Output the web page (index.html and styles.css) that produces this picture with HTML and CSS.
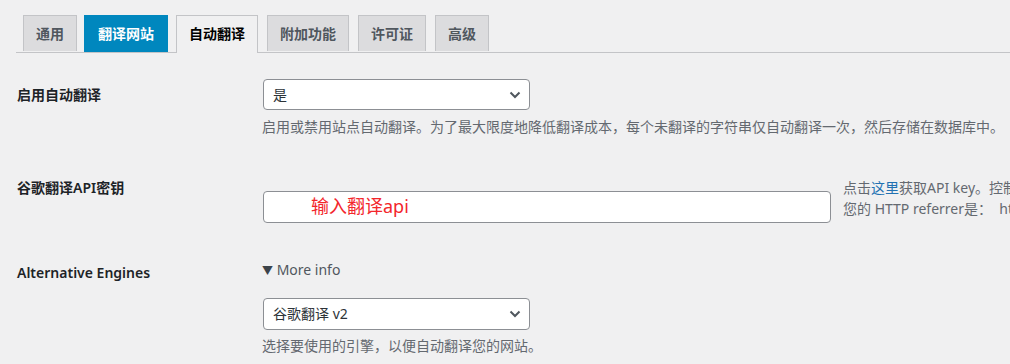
FILE: index.html
```html
<!DOCTYPE html>
<html lang="zh-CN">
<head>
    <meta charset="UTF-8">
    <meta name="viewport" content="width=device-width, initial-scale=1.0">
    <title>自动翻译设置</title>
    <link rel="stylesheet" href="styles.css">
</head>
<body>
    <div class="nav-tabs">
        <a class="nav-tab">通用</a>
        <a class="nav-tab nav-tab-blue">翻译网站</a>
        <a class="nav-tab nav-tab-active">自动翻译</a>
        <a class="nav-tab">附加功能</a>
        <a class="nav-tab">许可证</a>
        <a class="nav-tab">高级</a>
    </div>

    <div class="form-table">
        <div class="form-row row-enable">
            <div class="form-label">启用自动翻译</div>
            <div class="form-field">
                <div class="select">
                    <span>是</span>
                    <svg class="chevron" width="12" height="8" viewBox="0 0 12 8"><path d="M1.5 1.5l4.5 4.5 4.5-4.5" fill="none" stroke="#50575e" stroke-width="2"/></svg>
                </div>
                <p class="description">启用或禁用站点自动翻译。为了最大限度地降低翻译成本，每个未翻译的字符串仅自动翻译一次，然后存储在数据库中。</p>
            </div>
        </div>

        <div class="form-row row-key">
            <div class="form-label">谷歌翻译API密钥</div>
            <div class="form-field field-inline">
                <div class="text-input">输入翻译api</div>
                <p class="description side-note">点击<a class="link">这里</a>获取API key。控制 API 成本并设置 HTTP referrer 限制。<br>您的 HTTP referrer是：&nbsp; https://www.example.com</p>
            </div>
        </div>

        <div class="form-row row-engine">
            <div class="form-label">Alternative Engines</div>
            <div class="form-field">
                <div class="more-info"><span class="arrow">▼</span> More info</div>
                <div class="select select-engine">
                    <span>谷歌翻译 v2</span>
                    <svg class="chevron" width="12" height="8" viewBox="0 0 12 8"><path d="M1.5 1.5l4.5 4.5 4.5-4.5" fill="none" stroke="#50575e" stroke-width="2"/></svg>
                </div>
                <p class="description">选择要使用的引擎，以便自动翻译您的网站。</p>
            </div>
        </div>
    </div>
</body>
</html>
```

FILE: styles.css
```css
html, body {
    overflow: hidden;
}
body {
    margin: 0;
    background-color: #f0f0f1;
    font-family: "Noto Sans", "Noto Sans CJK SC", sans-serif;
    color: #3c434a;
    font-size: 14px;
}
.nav-tabs {
    display: flex;
    margin-left: 16px;
    padding: 15px 0 0 7px;
    border-bottom: 1px solid #c3c4c7;
}
.nav-tab {
    display: block;
    margin-right: 9px;
    margin-bottom: -1px;
    padding: 6px 12px;
    line-height: 24px;
    font-size: 14px;
    font-weight: 600;
    color: #50575e;
    background-color: #dcdcde;
    border: 1px solid #c3c4c7;
    border-bottom: none;
    height: 36px;
    box-sizing: border-box;
}
.nav-tab:first-child {
    margin-right: 7px;
}
.nav-tab-blue {
    background-color: #0087be;
    border-color: #0087be;
    color: #fff;
    height: 37px;
    margin-bottom: 0;
    margin-right: 8px;
    padding: 6px 13px;
}
.nav-tab-active {
    background-color: #f0f0f1;
    color: #000;
    height: 38px;
}
.form-table {
    padding-left: 17px;
}
.form-row {
    display: flex;
    align-items: flex-start;
}
.form-label {
    width: 246px;
    flex-shrink: 0;
    font-weight: 600;
    color: #1d2327;
    line-height: 20px;
}
.form-field {
    flex-shrink: 0;
}
.row-enable {
    margin-top: 26px;
}
.row-enable .form-label {
    padding-top: 6px;
}
.select {
    width: 267px;
    height: 31px;
    box-sizing: border-box;
    border: 1px solid #8c8f94;
    border-radius: 4px;
    background-color: #fff;
    display: flex;
    align-items: center;
    justify-content: space-between;
    padding: 0 8px 0 9px;
    color: #2c3338;
    line-height: 20px;
}
.description {
    margin: 7px 0 0 -1px;
    font-size: 14px;
    line-height: 20px;
    color: #646970;
    white-space: nowrap;
}
.row-key {
    margin-top: 40px;
}
.row-key .form-label {
    line-height: 21px;
}
.field-inline {
    display: flex;
    align-items: flex-start;
}
.text-input {
    width: 568px;
    height: 32px;
    box-sizing: border-box;
    margin-top: 14px;
    border: 1px solid #8c8f94;
    border-radius: 4px;
    background-color: #fff;
    padding-left: 47px;
    color: #f3262b;
    font-size: 18px;
    line-height: 29px;
}
.side-note {
    margin: 0 0 0 12px;
    line-height: 21px;
}
.link {
    color: #2271b1;
}
.row-engine {
    margin-top: 37px;
}
.row-engine .form-label {
    padding-top: 3px;
}
.more-info {
    margin-left: -1px;
    line-height: 20px;
    color: #50575e;
}
.arrow {
    font-size: 11px;
    color: #3c434a;
}
.select-engine {
    margin-top: 17px;
    height: 32px;
}
.row-engine .description {
    margin-top: 6px;
}
```
